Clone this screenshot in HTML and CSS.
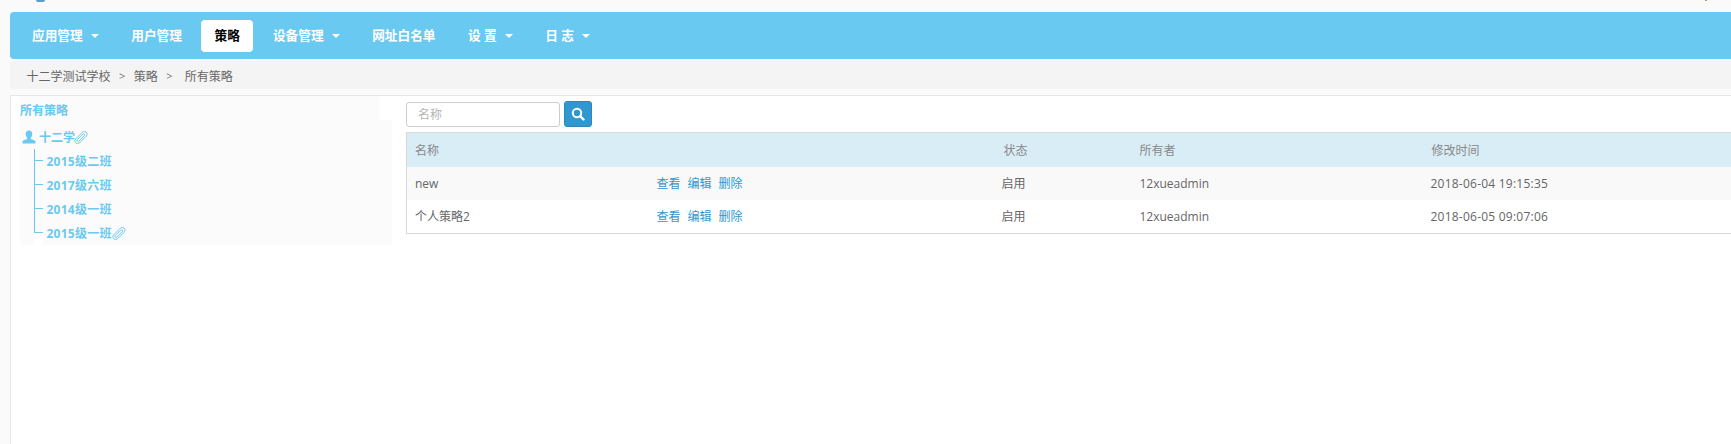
FILE: index.html
```html
<!DOCTYPE html>
<html lang="zh">
<head>
<meta charset="utf-8">
<title>策略</title>
<link rel="stylesheet" href="styles.css">
</head>
<body>
<div class="topstrip"><span class="logo-arc"></span><span class="top-dot"></span></div>
<nav class="navbar">
  <a class="nav-item">应用管理<i class="caret"></i></a>
  <a class="nav-item">用户管理</a>
  <a class="nav-item active">策略</a>
  <a class="nav-item">设备管理<i class="caret"></i></a>
  <a class="nav-item">网址白名单</a>
  <a class="nav-item">设 置<i class="caret"></i></a>
  <a class="nav-item">日 志<i class="caret"></i></a>
</nav>
<div class="crumbs">
  <span>十二学测试学校</span><span class="sep">&gt;</span><span>策略</span><span class="sep sep-wide">&gt;</span><span>所有策略</span>
</div>
<main class="page">
  <aside class="side">
    <div class="side-title">所有策略</div>
    <div class="root">
      <svg class="user" viewBox="0 0 14 14" width="14" height="14"><path fill="#6ac9f0" d="M7 0.5c2.1 0 3.3 1.6 3.3 3.6 0 1.500-.6 2.800-1.500 3.600v1.300c1.700.6 4 1.300 4.700 2.300v2.200H.5v-2.200c.7-1 3-1.700 4.700-2.300V7.700C4.300 6.900 3.700 5.600 3.700 4.100 3.700 2.100 4.900.5 7 .5z"/></svg>
      <span class="root-label">十二学</span><svg class="clip" viewBox="0 0 14 14" width="14" height="13"><g fill="none" stroke="#6ac9f0" stroke-width="1" transform="rotate(-45 7 7)"><rect x="-1" y="4" width="16" height="6" rx="3"/><rect x="1.500" y="5.800" width="10.500" height="2.400" rx="1.200"/></g></svg>
    </div>
    <ul class="tree">
      <li><span class="leaf">2015级二班</span></li>
      <li><span class="leaf">2017级六班</span></li>
      <li><span class="leaf">2014级一班</span></li>
      <li><span class="leaf">2015级一班</span><svg class="clip" viewBox="0 0 14 14" width="14" height="13"><g fill="none" stroke="#6ac9f0" stroke-width="1" transform="rotate(-45 7 7)"><rect x="-1" y="4" width="16" height="6" rx="3"/><rect x="1.500" y="5.800" width="10.500" height="2.400" rx="1.200"/></g></svg></li>
    </ul>
  </aside>
  <section class="content">
    <form class="search">
      <input class="search-input" type="text" placeholder="名称">
      <button class="search-btn" type="button"><svg viewBox="0 0 14 14" width="14" height="14"><circle cx="6" cy="6" r="4.200" fill="none" stroke="#fff" stroke-width="2"/><path d="M9.200 9.200 12.500 12.500" stroke="#fff" stroke-width="2.400" stroke-linecap="round"/></svg></button>
    </form>
    <table class="grid">
      <colgroup><col class="c1"><col class="c2"><col class="c3"><col class="c4"><col class="c5"></colgroup>
      <thead><tr><th>名称</th><th></th><th class="th-state">状态</th><th>所有者</th><th class="th-time">修改时间</th></tr></thead>
      <tbody>
        <tr class="odd"><td>new</td><td class="ops"><a>查看</a><a>编辑</a><a>删除</a></td><td>启用</td><td>12xueadmin</td><td class="time">2018-06-04 19:15:35</td></tr>
        <tr class="last"><td>个人策略2</td><td class="ops"><a>查看</a><a>编辑</a><a>删除</a></td><td>启用</td><td>12xueadmin</td><td class="time">2018-06-05 09:07:06</td></tr>
      </tbody>
    </table>
  </section>
</main>
</body>
</html>
```
FILE: styles.css
```css
* { box-sizing: border-box; }
html, body { margin: 0; height: 100%; overflow: hidden; }
body {
  background: #fafafa;
  font-family: "Open Sans", "Noto Sans CJK SC", sans-serif;
  font-size: 12px;
  color: #666;
}
.topstrip { height: 12px; display: flex; justify-content: space-between; padding: 0 24px 0 36px; overflow: hidden; }
.logo-arc { width: 9px; height: 2px; background: #5b9bd5; border-radius: 0 0 5px 5px; }
.top-dot { width: 2px; height: 1px; background: #b89a50; }
.navbar {
  height: 47px;
  margin-left: 10px;
  background: #6ac9f0;
  border-radius: 4px 0 0 4px;
  display: flex;
  align-items: center;
  padding: 0 0 0 9px;
}
.nav-item {
  height: 32px;
  padding: 0 13px 2px;
  margin-right: 6.500px;
  display: flex;
  align-items: center;
  color: #fff;
  font-size: 12.700px;
  font-weight: 700;
  border-radius: 4px;
  white-space: nowrap;
}
.nav-item.active { background: #fff; color: #000; margin-left: -1px; padding: 0 13.500px 2px 14px; }
.caret {
  width: 0; height: 0;
  margin-left: 8px;
  margin-top: 2px;
  border-left: 4px solid transparent;
  border-right: 4px solid transparent;
  border-top: 4px solid #fff;
}
.crumbs {
  height: 28px;
  margin: 2px 0 0 10px;
  background: #f4f4f4;
  border-radius: 4px 0 0 4px;
  display: flex;
  align-items: center;
  padding: 1px 0 0 16.500px;
  color: #666;
  font-size: 12px;
}
.sep { margin: 0 8.500px; color: #777; font-size: 11px; }
.sep-wide { margin-right: 12px; }
.page {
  margin: 6px 0 0 10px;
  height: 349px;
  background: #fff;
  border-left: 1px solid #e8e8e8;
  border-top: 1px solid #e6e6e6;
  display: flex;
}
.side { width: 382px; padding-left: 9px; flex: none; }
.side-title {
  height: 24px;
  width: 359px;
  line-height: 29px;
  font-weight: 700;
  color: #6ac9f0;
  font-size: 12px;
  background: #fbfbfb;
}
.root {
  background: #fbfbfb;
  height: 29px;
  width: 372px;
  display: flex;
  align-items: center;
  padding: 5px 0 0 2px;
  color: #6ac9f0;
  font-weight: 700;
}
.root-label { margin-left: 3px; }
.root .clip { margin-left: -1px; }
.tree { list-style: none; margin: 0; padding: 0 0 0 14px; width: 372px; background: #fbfbfb; }
.tree li {
  height: 24px;
  display: flex;
  align-items: center;
  padding-left: 12.500px;
  color: #6ac9f0;
  font-weight: 700;
  position: relative;
}
.leaf { letter-spacing: 0.250px; }
.tree li::before { content: ""; position: absolute; left: 0; top: 0; bottom: 0; width: 9px; border-left: 1px solid #6ac9f0; }
.tree li::after { content: ""; position: absolute; left: 0; top: 11px; width: 9px; border-top: 1px solid #6ac9f0; }
.tree li:last-child::before { bottom: 12px; }
.tree li:last-child::after { height: 13px; background: #fff; }
.content { flex: 1; padding: 6px 0 0 13px; min-width: 0; }
.search { display: flex; gap: 4px; align-items: flex-start; height: 30px; margin: 0; }
.search-input {
  width: 154px; height: 25px;
  border: 1px solid #ccc;
  border-radius: 3px;
  padding: 0 11px;
  font: 12px "Open Sans", "Noto Sans CJK SC", sans-serif;
  background: #fff;
}
.search-input::placeholder { color: #b5b5b5; }
.search-btn {
  width: 28px; height: 26px; margin-top: -1px;
  padding: 0;
  border: 1px solid #2a88bd;
  border-radius: 3px;
  background: #3097d1;
  display: flex; align-items: center; justify-content: center;
}
.grid {
  width: 100%;
  table-layout: fixed;
  border-collapse: collapse;
  border: 1px solid #d8d8d8;
  border-right: 0;
}
.c1 { width: 242px; }
.c2 { width: 345px; }
.c3 { width: 138px; }
.c4 { width: 291px; }
.grid th, .grid td { text-align: left; padding: 0 8px; font-weight: 400; font-size: 12px; }
.grid th { height: 34px; background: #d9edf6; color: #888; }
.grid .th-state { padding-left: 10px; }
.grid .th-time { padding-left: 9px; }
.grid td { height: 33px; color: #666; }
.grid .last td { height: 34px; }
.grid .odd td { background: #f9f9f9; }
.grid .time { letter-spacing: 0.230px; }
.ops a { color: #3097d1; margin-right: 7px; }
```
